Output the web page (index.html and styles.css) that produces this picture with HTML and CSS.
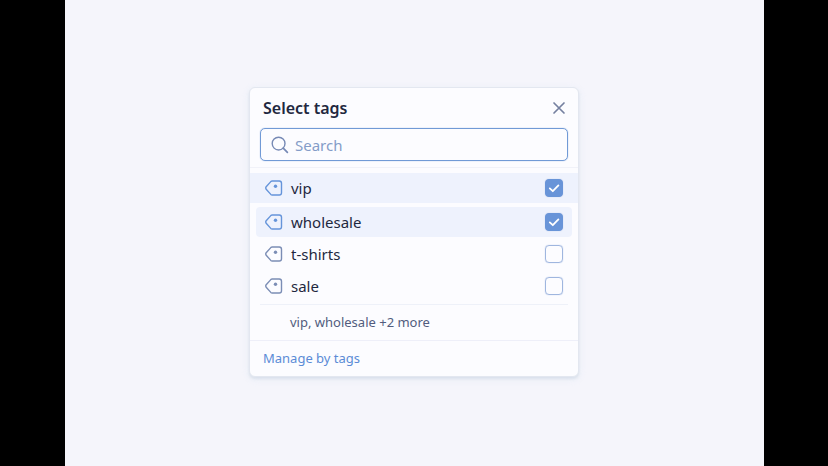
FILE: index.html
```html
<!DOCTYPE html>
<html lang="en">
<head>
<meta charset="utf-8">
<meta name="viewport" content="width=device-width, initial-scale=1">
<title>Select tags</title>
<link rel="stylesheet" href="styles.css">
</head>
<body>
<svg class="sprite" aria-hidden="true">
  <symbol id="tag" viewBox="0 0 18 16">
    <path d="M7.2 1H14.3A2.2 2.2 0 0 1 16.5 3.2V12.8A2.2 2.2 0 0 1 14.3 15H7.2Q6.4 15 5.8 14.4L1.2 9.3Q.3 8 1.2 6.7L5.8 1.6Q6.4 1 7.2 1Z" fill="none" stroke="currentColor" stroke-width="1.4" stroke-linejoin="round"/>
    <circle cx="10.5" cy="6.3" r="1.7" fill="currentColor"/>
  </symbol>
</svg>
<main class="stage">
  <section class="picker" aria-labelledby="picker-title">
    <header class="picker-header">
      <h1 class="picker-title" id="picker-title">Select tags</h1>
      <button class="close" type="button" aria-label="Close">
        <svg width="14" height="14" viewBox="0 0 14 14"><path d="M2 2L12 12M12 2L2 12" fill="none" stroke="currentColor" stroke-width="1.7" stroke-linecap="round"/></svg>
      </button>
    </header>
    <div class="search">
      <svg class="search-icon" width="18" height="18" viewBox="0 0 18 18"><circle cx="7.6" cy="7.6" r="6.4" fill="none" stroke="currentColor" stroke-width="1.4"/><path d="M12.2 12.2L16.4 16.4" fill="none" stroke="currentColor" stroke-width="1.7" stroke-linecap="round"/></svg>
      <input class="search-input" type="text" placeholder="Search" aria-label="Search">
    </div>
    <div class="tags">
      <label class="tag tag-selected tag-active"><svg class="tag-icon"><use href="#tag"/></svg><span class="tag-name">vip</span><input class="check" type="checkbox" checked></label>
      <label class="tag tag-selected"><svg class="tag-icon"><use href="#tag"/></svg><span class="tag-name">wholesale</span><input class="check" type="checkbox" checked></label>
      <label class="tag"><svg class="tag-icon"><use href="#tag"/></svg><span class="tag-name">t-shirts</span><input class="check" type="checkbox"></label>
      <label class="tag"><svg class="tag-icon"><use href="#tag"/></svg><span class="tag-name">sale</span><input class="check" type="checkbox"></label>
    </div>
    <p class="summary">vip, wholesale +2 more</p>
    <footer class="picker-footer"><a class="manage" href="#">Manage by tags</a></footer>
  </section>
</main>
</body>
</html>
```
FILE: styles.css
```css
* {
  box-sizing: border-box;
}

body {
  margin: 0;
  min-height: 100vh;
  display: flex;
  justify-content: center;
  background: #000;
  color: #1f2840;
  font: 15px/20px "Noto Sans", sans-serif;
}

.sprite {
  display: none;
}

.stage {
  min-height: 100vh;
  aspect-ratio: 3 / 2;
  display: flex;
  align-items: center;
  justify-content: center;
  padding-bottom: 2px;
  background: #f5f5fb;
}

.picker {
  width: 330px;
  max-width: 100%;
  border: 1px solid #e3e7f0;
  border-radius: 6px;
  background: #fcfcff;
  box-shadow: 0 2px 3px #ccd5e399, 0 2px 8px #dce5f566;
}

.picker-header {
  display: flex;
  align-items: center;
  justify-content: space-between;
  height: 40px;
  padding: 0 12px 0 13px;
}

.picker-title {
  margin: 0;
  font-size: 16px;
  font-weight: 600;
}

.close {
  display: flex;
  padding: 0;
  border: 0;
  background: none;
  color: #7580a0;
}

.search {
  display: flex;
  align-items: center;
  gap: 6px;
  height: 33px;
  margin: 0 10px 6px;
  padding: 0 10px;
  border: 1px solid #719ad6;
  border-radius: 5px;
  box-shadow: 0 0 1px #719ad6;
}

.search-icon {
  color: #7689b5;
}

.search-input {
  flex: 1;
  min-width: 0;
  padding: 0;
  border: 0;
  outline: 0;
  background: none;
  color: inherit;
  font: inherit;
}

.search-input::placeholder {
  color: #849cc8;
  opacity: 1;
}

.tags {
  padding: 5px 0 2px;
  border-top: 1px solid #f1f2f9;
}

.tag {
  display: flex;
  align-items: center;
  height: 32px;
  margin: 0 6px;
  padding: 0 9px;
}

.tag-selected {
  height: 30px;
  margin-bottom: 1px;
  border-radius: 4px;
  background: #eef2fd;
}

.tag-active {
  margin: 0 0 4px;
  padding: 0 15px;
  border-radius: 0;
}

.tag-icon {
  width: 18px;
  height: 16px;
  margin-right: 8px;
  color: #7b8db5;
}

.tag-selected .tag-icon {
  color: #6594da;
}

.tag-name {
  flex: 1;
}

.check {
  appearance: none;
  width: 18px;
  height: 18px;
  margin: 0;
  border: 1px solid #9fb6df;
  border-radius: 4px;
  box-shadow: 0 0 1px #9fb6df;
}

.check:checked {
  border-color: #6894d8;
  background: #6894d8 url("data:image/svg+xml,%3Csvg xmlns='http://www.w3.org/2000/svg' viewBox='0 0 16 16'%3E%3Cpath d='M3.8 8.4L6.8 11.2L12.4 5.4' fill='none' stroke='white' stroke-width='1.8' stroke-linecap='round' stroke-linejoin='round'/%3E%3C/svg%3E") center / 16px no-repeat;
}

.summary {
  margin: 0 10px;
  padding: 7px 30px 8px;
  border-top: 1px solid #eef1f9;
  color: #525c7e;
  font-size: 13px;
}

.picker-footer {
  padding: 6px 13px 8px;
  border-top: 1px solid #eeeff9;
}

.manage {
  color: #5b8bd6;
  font-size: 13px;
  text-decoration: none;
}
```
